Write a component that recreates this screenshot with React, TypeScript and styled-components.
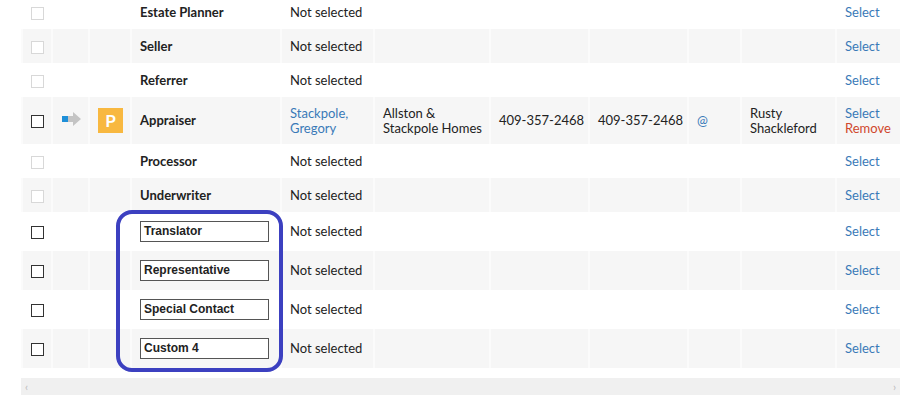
import React from "react";
import styled, { createGlobalStyle } from "styled-components";

const Global = createGlobalStyle`
  body { margin: 0; background: #fff; font-family: Lato, "Open Sans", sans-serif; overflow: hidden; }
`;

const Page = styled.div`
  position: relative;
  padding-left: 21px;
  margin-top: -5px;
`;

const Table = styled.table`
  border-collapse: collapse;
  width: 879px;
  table-layout: fixed;
  font-size: 13px;
  color: #222;
`;

const Row = styled.tr<{ shade?: boolean; h: number }>`
  height: ${p => p.h}px;
  background: ${p => (p.shade ? "#f6f6f6" : "#fff")};
  td { border-left: 2px solid ${p => (p.shade ? "#fbfbfb" : "#fff")}; }
`;

const Cell = styled.td<{ pad?: number }>`
  padding: 0 0 0 ${p => p.pad ?? 8}px;
  vertical-align: middle;
  line-height: 15px;
`;

const Box = styled.span<{ faint?: boolean }>`
  display: inline-block;
  width: 11px;
  height: 11px;
  border: 1px solid ${p => (p.faint ? "#d8d8d8" : "#333")};
  background: #fff;
  vertical-align: middle;
`;

const Role = styled.span`
  font-weight: 700;
  color: #222;
`;

const RoleInput = styled.div`
  width: 124px;
  height: 19px;
  border: 1px solid #555;
  background: #fff;
  font: 700 12px "Liberation Sans", Arial, sans-serif;
  line-height: 19px;
  padding-left: 3px;
`;

const Link = styled.a<{ red?: boolean }>`
  display: block;
  color: ${p => (p.red ? "#d0482c" : "#3a7ab8")};
  text-decoration: none;
`;

const Badge = styled.span`
  display: inline-block;
  width: 25px;
  height: 25px;
  background: #f8b840;
  color: #fff;
  font-weight: 700;
  font-size: 17px;
  text-align: center;
  line-height: 25px;
`;

const Scrollbar = styled.div`
  width: 879px;
  height: 17px;
  margin-top: 10px;
  background: #f0f0f0;
  display: flex;
  justify-content: space-between;
  align-items: center;
  padding: 0 4px;
  box-sizing: border-box;
  color: #bbb;
  font-size: 11px;
`;

const Highlight = styled.div`
  position: absolute;
  left: 116px;
  top: 215px;
  width: 159px;
  height: 154px;
  border: 4px solid #3c40c0;
  border-radius: 16px;
  pointer-events: none;
`;

type R = { role: string; h: number; input?: boolean; faint?: boolean };

const rows: R[] = [
  { role: "Estate Planner", h: 34, faint: true },
  { role: "Seller", h: 34, faint: true },
  { role: "Referrer", h: 34, faint: true },
  { role: "Appraiser", h: 47 },
  { role: "Processor", h: 34, faint: true },
  { role: "Underwriter", h: 34, faint: true },
  { role: "Translator", h: 39, input: true },
  { role: "Representative", h: 39, input: true },
  { role: "Special Contact", h: 39, input: true },
  { role: "Custom 4", h: 39, input: true },
];

const Arrow = () => (
  <svg width="22" height="16" viewBox="0 0 22 16">
    <rect x="1" y="5" width="6" height="6" fill="#1e8fd8" />
    <path d="M7 5h5V1l8 7-8 7v-4H7z" fill="#c4c4c4" />
  </svg>
);

export default function App() {
  return (
    <>
      <Global />
      <Page>
        <Table>
          <colgroup>
            <col style={{ width: 30 }} />
            <col style={{ width: 37 }} />
            <col style={{ width: 42 }} />
            <col style={{ width: 150 }} />
            <col style={{ width: 93 }} />
            <col style={{ width: 116 }} />
            <col style={{ width: 99 }} />
            <col style={{ width: 99 }} />
            <col style={{ width: 53 }} />
            <col style={{ width: 95 }} />
            <col style={{ width: 65 }} />
          </colgroup>
          <tbody>
            {rows.map((r, i) => {
              const app = r.role === "Appraiser";
              return (
                <Row key={r.role} h={r.h} shade={i % 2 === 1}>
                  <Cell><Box faint={r.faint} /></Cell>
                  <Cell>{app && <Arrow />}</Cell>
                  <Cell>{app && <Badge>P</Badge>}</Cell>
                  <Cell>{r.input ? <RoleInput>{r.role}</RoleInput> : <Role>{r.role}</Role>}</Cell>
                  <Cell>{app ? <Link>Stackpole, Gregory</Link> : "Not selected"}</Cell>
                  <Cell>{app && "Allston & Stackpole Homes"}</Cell>
                  <Cell>{app && "409-357-2468"}</Cell>
                  <Cell>{app && "409-357-2468"}</Cell>
                  <Cell>{app && <Link>@</Link>}</Cell>
                  <Cell>{app && "Rusty Shackleford"}</Cell>
                  <Cell>
                    <Link>Select</Link>
                    {app && <Link red>Remove</Link>}
                  </Cell>
                </Row>
              );
            })}
          </tbody>
        </Table>
        <Scrollbar><span>‹</span><span>›</span></Scrollbar>
        <Highlight />
      </Page>
    </>
  );
}
